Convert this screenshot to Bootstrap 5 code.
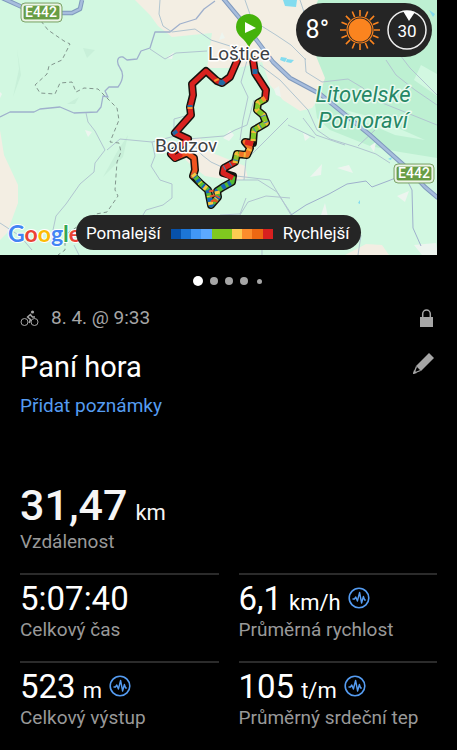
<!DOCTYPE html>
<html lang="cs" data-bs-theme="dark">
<head>
<meta charset="utf-8">
<meta name="viewport" content="width=device-width, initial-scale=1">
<title>Paní hora</title>
<link href="https://cdn.jsdelivr.net/npm/bootstrap@5.3.0/dist/css/bootstrap.min.css" rel="stylesheet">
<style>
  body { background: #000; color: #fff; font-family: Roboto, "Noto Sans", sans-serif; }
  .side { padding-left: 20px; padding-right: 20px; }
  .map-area { margin-right: 20px; }
  .map-area > svg { width: 100%; height: auto; }
  .pill { background: #252525; border-radius: 40px; }
  .weather { top: 3px; right: 5px; height: 54px; padding: 0 5px 0 10px; gap: 7px; font-size: 25px; }
  .legend { bottom: 5px; left: 76px; height: 35px; padding: 2px 11px 0 10px; gap: 10px; font-size: 17px; white-space: nowrap; }
  .scale { width: 102px; height: 10px; }
  .pager { height: 52px; gap: 7px; padding: 0; margin-right: 3px; }
  .pager button { width: 8px; height: 8px; padding: 0; border: 0; border-radius: 50%; background: #a6a6a6; }
  .pager .current { width: 10px; height: 10px; background: #fff; }
  .pager .last { width: 5px; height: 5px; margin-left: 2px; }
  .when { height: 22px; font-size: 19px; color: #a6a6a6; }
  .muted { font-size: 19px; line-height: 24px; color: #999; }
  .title { font-size: 29px; line-height: 36px; font-weight: 400; }
  .notes { font-size: 19px; line-height: 26px; color: #559cf1; }
  .plain { padding: 0; border: 0; background: none; line-height: 0; color: #a6a6a6; }
  .distance { margin-top: 62px; margin-bottom: 19px; }
  .total { font-size: 43px; line-height: 49px; font-weight: 500; color: #f5f5f5; gap: 8px; }
  .unit { font-size: 22px; line-height: 24px; font-weight: 400; }
  .stats { --bs-gutter-x: 20px; }
  .stat { border-top: 2px solid #2b2b2b; height: 88px; padding-top: 5px; }
  .value { font-size: 33px; line-height: 38px; gap: 7px; }
  .pulse { color: #559cf1; align-self: center; margin-bottom: 2px; }
</style>
<script src="https://cdn.jsdelivr.net/npm/bootstrap@5.3.0/dist/js/bootstrap.bundle.min.js"></script>
</head>
<body>
<svg width="0" height="0" class="position-absolute" aria-hidden="true">
  <symbol id="pulse" viewBox="0 0 22 22">
    <circle cx="11" cy="11" r="9.8" fill="none" stroke="currentColor" stroke-width="1.6"/>
    <path d="M4.500 12h2l1.300-2 1.600 4 2.200-8.500 2 10.500 1.800-6.500 1.200 3.500h1.200" fill="none" stroke="currentColor" stroke-width="1.400" stroke-linejoin="round"/>
  </symbol>
</svg>

<div class="map-area position-relative">
  <svg class="d-block" viewBox="0 0 437 255" role="img" aria-label="Mapa trasy">
    <rect width="437" height="255" fill="#d2f8e1"/>
    <path d="M212 0H437V158L400 152 370 146 330 130 317 118 310 70 290 0Z" fill="#bdf0d2"/>
    <path d="M135 0L150 15 158 26 172 37 212 33 207 68 238 68 262 62 270 85 283 100 300 111 312 108 318 100 325 78 316 56 303 40 318 0ZM0 130L4 155 18 185 18 203 7 233 0 240ZM170 145L200 138 210 152 230 160 245 166 248 178 235 181 205 176 191 165ZM345 255L366 244 382 245 389 255Z" fill="#f3eee3"/>
    <g fill="#c8f0d9">
      <path d="M17 49l2 20-6 28 8-22zM67 104l12-7-4 7zM103 177l20-20 5-22-11 17zM83 48l12 2-8 8z"/>
      <path d="M421 65l16 9v22l-23-16zM345 110l30 8 50 22-30-5-35-15z" fill="#d2f8e1"/>
    </g>
    <g fill="#edf5ef">
      <path d="M310 177l12-13-1 11zM337 168l12-3 4 8zM321 215l4-12 3 14-4 5zM397 196l12-5-4 11zM414 245l22-2 2 12h-16zM274 89l5-3 2 11-5-2zM222 32l3 6-6 2zM166 58l8-6-2 7zM223 138l7-8 4 5-5 6zM85 130l7 2-4 5zM303 132l7 5-5 4zM370 146l6-4-2 10zM0 92l2 2-2 4zM385 28l9 3-5 6z"/>
      <path d="M283 0h14l-1 7-11-1zM281 57l6 1-2 4-5-2zM287 59l7 1-3 3-5-1zM358 203l2-3v4zM429 10l6 4-2 3zM388 159l4-2-1 3z" fill="#83dcef"/>
    </g>

    <g fill="none" stroke="#b1c5d0" stroke-width="1" stroke-linejoin="round">
      <path d="M0 117L10 112 34 112 40 109 60 107 74 113 97 112 101 107 103 96 108 97 105 91 109 87 118 87Q126 76 120 68C116 62 117 56 123 57L127 60 137 59 141 51 150 48 155 32 170 32 180 24 196 19 204 9 215 1" stroke="#9fb0cc" stroke-width="1.300"/>
      <path d="M150 49L165 59 176 53 207 51M160 0L159 14 163 26 172 32 195 29 211 40 230 46M86 113L88 122 95 131 105 150 95 163 94 172 80 184 66 204 56 216 53 230M107 150L120 139 152 142 175 136 190 140M152 142L155 156 151 166 160 180 172 184 172 198 163 205 146 210 140 220M245 0L252 20 276 35 291 45 306 60M260 65L280 80 308 110 317 130M305 58L306 72 322 82 348 79 363 88 375 100 437 125M317 130L330 139 356 147 376 154 390 163M288 125L315 138M303 118L316 135 345 145M358 146L375 130M250 50L241 82 248 97 243 120 240 140M236 180L258 180 277 192 292 215M228 175L270 180 291 215M290 198L266 196 248 202 240 215 238 220M220 215L240 214 246 198M194 146L188 139 224 136 235 130 247 125 254 100M288 118L246 160 244 180M400 55L410 68 437 95M262 220v35M358 255l3-20M0 223L20 236 32 250M74 245l5 10M300 0l5 15"/>
      <path d="M291 215L306 205 329 194 347 184 366 181 372 187 388 181 403 175 407 180 412 190 413 228 421 246" stroke="#9fb0cc"/>
      <path d="M194 145L202 155 211 162 224 168M174 129v-10l11-3M386 60L396 75 415 90 437 105"/>
    </g>
    <path d="M41 21L48 30 64 41 70 44 62 60 49 66 47 74 35 85 40 93 55 94 60 83 72 82 76 92 84 88 98 89 107 98 117 108 119 120 110 142 119 143 121 152 117 162 115 190 118 196 107 212 96 214 65 235 65 250 58 255" fill="none" stroke="#82958d" stroke-width="1" stroke-dasharray="4 3"/>
    <g fill="none" stroke-linejoin="round">
      <path d="M0 -3L22 7M60 13L72 13 80 9 82 0M222 -3L242 21 258 42 273 62 290 78 320 94 370 135 389 152 407 168 425 187 438 198" stroke="#7f99bd" stroke-width="4.500"/>
      <path d="M0 -3L22 7M60 13L72 13 80 9 82 0M222 -3L242 21 258 42 273 62 290 78 320 94 370 135 389 152 407 168 425 187 438 198" stroke="#a7bddd" stroke-width="2.500"/>
    </g>

    <g fill="none" stroke-linejoin="round" stroke-linecap="round">
      <path d="M237 61L230 77 222 83 217 81 206 71 192 84 193 95 190 107 191 115 182 125 175 133 188 139 177 149 171 154 175 158 187 153 194 158 195 170 193 176 201 184 208 190 211 205 218 197 217 191 223 187 232 182 233 176 223 173 224 168 235 162 237 154 247 155 250 148 245 142 253 143 254 130 266 123 263 115 257 110 258 103 265 99 266 90 255 73 253 60" stroke="#15130f" stroke-width="8"/>
      <path d="M237 61L230 77 222 83 217 81 206 71 192 84 193 95 190 107 191 115 182 125 175 133 188 139 177 149 171 154 175 158" stroke="#d9221f" stroke-width="5"/>
      <path d="M175 158L187 153 194 158 195 170 193 176" stroke="#ef5420" stroke-width="5"/>
      <path d="M171 154L175 158 180 155" stroke="#d9221f" stroke-width="5"/>
    </g>
    <g fill="none" stroke-linejoin="round" stroke-width="5">
      <path d="M193 174L201 184 208 190 211 205 218 197 217 191 223 187 232 182 233 176" stroke="#55bb33"/>
      <path d="M193 174L201 184 208 190 211 205 218 197 217 191 223 187 232 182" stroke="#1764b8" stroke-dasharray="4 3 3 5"/>
      <path d="M193 174L201 184 208 190 211 205 218 197 217 191 223 187" stroke="#fbc63d" stroke-dasharray="1 5 3 8" stroke-dashoffset="6"/>
      <path d="M211 190L214 203 218 196" stroke="#e65527" stroke-dasharray="2 3"/>
      <path d="M233 178L223 173 224 168 235 162" stroke="#d9221f"/>
      <path d="M235 163L237 154 247 155 250 148" stroke="#88bf2b"/>
      <path d="M239 154L247 155 250 148 245 142 253 144" stroke="#ef7427"/>
      <path d="M245 142L253 144" stroke="#d9221f"/>
      <path d="M253 141L254 130 266 123 263 115 257 110 258 103 265 99" stroke="#86c928"/>
      <path d="M235 163L237 154 247 155 250 148M253 141L254 130 266 123 263 115 257 110 258 103 265 99" stroke="#f6b83a" stroke-dasharray="2 6"/>
      <path d="M224 168L235 162 237 154M254 130L266 123 263 115" stroke="#3c84b0" stroke-dasharray="1 6"/>
      <path d="M265 100L266 90 255 73 253 60" stroke="#d9221f"/>
      <path d="M255 74L255 69M219 82L222 83 224 81M190 105V107M174 131L176 134" stroke="#2269a2"/>
      <path d="M216 79l1 2M190 107v2M265 98l-3 2" stroke="#f7912e"/>
    </g>
    <path d="M249 48C246 38 236 37 236 27A13 13 0 0 1 262 27C262 37 252 38 249 48Z" fill="#45b20b"/>
    <path d="M245 22L256 28 245 33Z" fill="#fff"/>

    <g stroke="#fff" stroke-width="3" paint-order="stroke" stroke-linejoin="round" font-family="Roboto, sans-serif">
      <text x="208" y="60" font-size="19" fill="#3d4144">Loštice</text>
      <text x="155" y="152" font-size="19" fill="#3d4144">Bouzov</text>
      <g font-size="22" font-style="italic" fill="#258765" text-anchor="middle" stroke="#e9fbf0">
        <text x="363" y="102">Litovelské</text>
        <text x="363" y="128">Pomoraví</text>
      </g>
      <text x="8" y="242" font-family="Lato, sans-serif" font-size="23" font-weight="700" stroke-width="2"><tspan fill="#4285f4">G</tspan><tspan fill="#ea4335">o</tspan><tspan fill="#fbbc04">o</tspan><tspan fill="#4285f4">g</tspan><tspan fill="#34a853">l</tspan><tspan fill="#ea4335">e</tspan></text>
    </g>
    <g fill="#689d45" stroke="#fff" stroke-width="1">
      <rect x="21" y="3" width="41" height="19" rx="4" fill="#dcebd4" stroke="#7fa56b"/>
      <rect x="23" y="5" width="37" height="15" rx="2"/>
      <rect x="394" y="164" width="40" height="19" rx="4" fill="#dcebd4" stroke="#7fa56b"/>
      <rect x="396" y="166" width="36" height="15" rx="2"/>
    </g>
    <g fill="#fff" font-family="Roboto, sans-serif" font-size="14" font-weight="500" text-anchor="middle">
      <text x="41" y="17">E442</text>
      <text x="414" y="178">E442</text>
    </g>
  </svg>

  <div class="weather pill position-absolute d-flex align-items-center">
    <span class="me-1">8°</span>
    <svg width="40" height="40" viewBox="0 0 40 40" aria-label="Slunečno">
      <path d="M20 0v6M20 34v6M0 20h6M34 20h6M5.900 5.900l4.200 4.200M29.900 29.900l4.200 4.200M5.900 34.100l4.200-4.200M29.900 10.100l4.200-4.200M12.300 1.500l2.300 5.500M25.400 33l2.300 5.500M1.500 27.700l5.500-2.300M33 14.600l5.500-2.300M1.500 12.300l5.500 2.300M33 25.400l5.500 2.300M12.300 38.500l2.300-5.500M25.400 7l2.300-5.500" stroke="#fb841f" stroke-width="1.600"/>
      <circle cx="20" cy="20" r="13" fill="none" stroke="#fb841f" stroke-width="1.200"/>
      <circle cx="20" cy="20" r="11.500" fill="#fb841f"/>
    </svg>
    <svg width="40" height="40" viewBox="0 0 40 40" aria-label="Vítr 30">
      <circle cx="20" cy="20" r="19" fill="none" stroke="#eee" stroke-width="1.500"/>
      <path d="M16 1Q21 0 28 2L22 11Z" fill="#fff"/>
      <text x="20" y="27" font-size="17" fill="#fff" text-anchor="middle">30</text>
    </svg>
  </div>

  <div class="legend pill position-absolute d-flex align-items-center">
    <span>Pomalejší</span>
    <svg class="scale" viewBox="0 0 102 10" preserveAspectRatio="none" aria-hidden="true">
      <path d="M0 0h10v10H0z" fill="#0751a9"/><path d="M10 0h10v10H10z" fill="#1c75d5"/>
      <path d="M20 0h10v10H20z" fill="#4197f6"/><path d="M30 0h11v10H30z" fill="#5ca9ff"/>
      <path d="M41 0h20v10H41z" fill="#80c91f"/><path d="M61 0h10v10H61z" fill="#fccc51"/>
      <path d="M71 0h10v10H71z" fill="#fc8d2c"/><path d="M81 0h11v10H81z" fill="#ed6712"/>
      <path d="M92 0h10v10H92z" fill="#d8201f"/>
    </svg>
    <span>Rychlejší</span>
  </div>
</div>

<main>
  <nav class="pager d-flex align-items-center justify-content-center" aria-label="Stránky">
    <button type="button" class="current" aria-label="1"></button>
    <button type="button" aria-label="2"></button>
    <button type="button" aria-label="3"></button>
    <button type="button" aria-label="4"></button>
    <button type="button" class="last" aria-label="5"></button>
  </nav>

  <section class="side">
    <div class="when d-flex align-items-center">
      <svg width="19" height="17" viewBox="0 0 19 17" fill="none" stroke="#a6a6a6" aria-hidden="true">
        <circle cx="4.500" cy="12" r="3.500"/><circle cx="14.500" cy="12" r="3.500"/>
        <circle cx="12.500" cy="2" r="1.600" fill="#a6a6a6" stroke="none"/>
        <path d="M11 4L7.500 7 10.500 9.500 9.200 13M10.500 5L12.500 7H15" stroke-width="1.600" stroke-linejoin="round"/>
      </svg>
      <span class="ms-2 ps-1">8. 4. @ 9:33</span>
      <svg class="ms-auto me-1" width="13" height="18" viewBox="0 0 13 18" aria-label="Soukromé">
        <path d="M0 8h13v10H0z" fill="#a6a6a6"/>
        <path d="M2.700 9V5a3.800 4 0 0 1 7.600 0v4" fill="none" stroke="#a6a6a6" stroke-width="1.500"/>
      </svg>
    </div>

    <div class="d-flex align-items-center justify-content-between mt-3 pt-1">
      <h1 class="title m-0">Paní hora</h1>
      <button type="button" class="plain pb-2" aria-label="Upravit">
        <svg width="24" height="21" viewBox="0 0 24 21">
          <path d="M16 0L21 5 8 18 3 13Z" fill="currentColor"/>
          <path d="M3.500 13.500L1 20 7.500 17.500" fill="none" stroke="currentColor" stroke-width="1.300"/>
          <path d="M0 21L1 17 4 20Z" fill="currentColor"/>
        </svg>
      </button>
    </div>
    <a href="#" class="notes d-inline-block text-decoration-none mt-2">Přidat poznámky</a>

    <div class="distance">
      <div class="total d-flex align-items-baseline">31,47 <span class="unit">km</span></div>
      <div class="muted">Vzdálenost</div>
    </div>

    <div class="row stats">
      <div class="col-6"><div class="stat">
        <div class="value d-flex align-items-baseline">5:07:40</div>
        <div class="muted">Celkový čas</div>
      </div></div>
      <div class="col-6"><div class="stat">
        <div class="value d-flex align-items-baseline">6,1 <span class="unit">km/h</span> <svg class="pulse" width="22" height="22"><use href="#pulse"/></svg></div>
        <div class="muted">Průměrná rychlost</div>
      </div></div>
      <div class="col-6"><div class="stat">
        <div class="value d-flex align-items-baseline">523 <span class="unit">m</span> <svg class="pulse" width="22" height="22"><use href="#pulse"/></svg></div>
        <div class="muted">Celkový výstup</div>
      </div></div>
      <div class="col-6"><div class="stat">
        <div class="value d-flex align-items-baseline">105 <span class="unit">t/m</span> <svg class="pulse" width="22" height="22"><use href="#pulse"/></svg></div>
        <div class="muted">Průměrný srdeční tep</div>
      </div></div>
    </div>
  </section>
</main>
</body>
</html>
